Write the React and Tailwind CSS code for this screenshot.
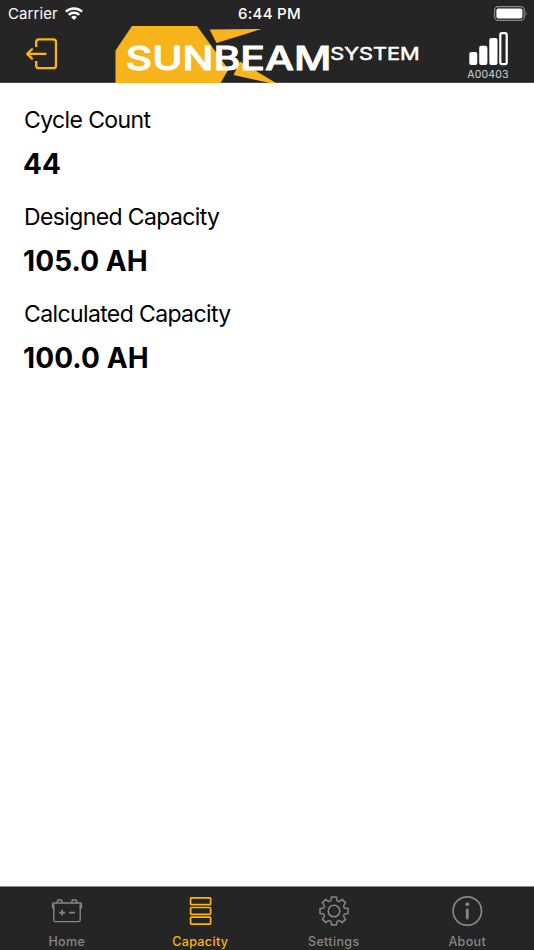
import React, { useState } from "react";

const readings = [
  { label: "Cycle Count", value: "44" },
  { label: "Designed Capacity", value: "105.0 AH" },
  { label: "Calculated Capacity", value: "100.0 AH" },
];

const WifiIcon = () => (
  <svg width="18" height="14" viewBox="0 0 18 14" fill="none" stroke="white" strokeWidth="2.5">
    <path d="M0.9 4.7 A11.6 11.6 0 0 1 17.1 4.7" />
    <path d="M3.8 7.8 A7.5 7.5 0 0 1 14.2 7.8" />
    <path d="M9 13.1 L6.1 10.2 A4.2 4.2 0 0 1 11.9 10.2 Z" fill="white" stroke="none" />
  </svg>
);

const BatteryIcon = () => (
  <svg width="34" height="16" viewBox="0 0 34 16" fill="none">
    <rect x="0.6" y="0.6" width="29.6" height="13.8" rx="3.6" stroke="#8a8a8a" strokeWidth="1.2" />
    <rect x="2.4" y="2.4" width="26" height="10.2" rx="2" fill="white" />
    <path d="M31.6 5.3 Q33.6 7.5 31.6 9.7 Z" fill="#8a8a8a" />
  </svg>
);

const LogoutIcon = () => (
  <svg
    width="32"
    height="32"
    viewBox="0 0 32 32"
    fill="none"
    stroke="#fdb60d"
    strokeWidth="2.3"
    strokeLinecap="round"
    strokeLinejoin="round"
  >
    <path strokeLinecap="butt" d="M10.2 9 V4.1 Q10.2 1.3 13 1.3 H27.2 Q30 1.3 30 4.1 V27.4 Q30 30.2 27.2 30.2 H13 Q10.2 30.2 10.2 27.4 V22.9" />
    <path d="M19.5 15.9 H1.4 M6 11.2 L1.2 15.9 L6 20.6" />
  </svg>
);

const Logo = () => (
  <svg width="306" height="57" viewBox="0 0 306 57" className="block">
    <g fill="#f7b51b">
      <path d="M0.5 57 V24.5 L17 0 H82 L113.5 43.5 L105.5 57 Z" />
      <path d="M94.6 3.6 L146.5 3 L101.5 17 Z" />
      <path d="M125 35.5 L161 57 H155 L118.5 49 Z" />
    </g>
    <g fill="white" stroke="white" fontFamily="Inter, sans-serif">
      <text x="10.8" y="44.3" fontSize="32" fontWeight="500" strokeWidth="0.9" textLength="205.5" lengthAdjust="spacingAndGlyphs">
        SUNBEAM
      </text>
      <text x="215.2" y="33.6" fontSize="17.6" fontWeight="400" strokeWidth="0.5" textLength="89.5" lengthAdjust="spacingAndGlyphs">
        SYSTEM
      </text>
    </g>
  </svg>
);

const SignalIcon = () => (
  <svg width="40" height="34" viewBox="0 0 40 34" fill="white">
    <rect x="1.3" y="20" width="8" height="13" rx="2" />
    <rect x="11.2" y="13.7" width="8.2" height="19.3" rx="2" />
    <rect x="21.3" y="6" width="8.2" height="27" rx="2" />
    <rect x="32.3" y="1.1" width="6.4" height="31" rx="1.6" fill="none" stroke="white" strokeWidth="2.2" />
  </svg>
);

const HomeIcon = () => (
  <svg width="32" height="32" viewBox="0 0 32 32" fill="none" stroke="currentColor" strokeWidth="1.4" strokeLinejoin="round">
    <path d="M2.8 9.2 V25 Q2.8 26.6 4.4 26.6 H27.6 Q29.2 26.6 29.2 25 V9.2" />
    <path d="M2.8 12.8 H1.6 V9 Q1.6 8 2.6 8 H29.4 Q30.4 8 30.4 9 V12.8 H29.2" />
    <path d="M6 8 L6.8 5 H10.6 L11.4 8 M20.6 8 L21.4 5 H25.2 L26 8" />
    <path strokeWidth="1.8" d="M8.2 17.6 H14 M11.1 14.7 V20.5 M18 17.6 H24" />
  </svg>
);

const CapacityIcon = () => (
  <svg width="32" height="32" viewBox="0 0 32 32" fill="none" stroke="currentColor" strokeWidth="1.7">
    <rect x="6.6" y="2.8" width="20" height="6.9" rx="0.8" />
    <rect x="6.6" y="12.5" width="20" height="6.9" rx="0.8" />
    <rect x="6.6" y="22.2" width="20" height="6.9" rx="0.8" />
  </svg>
);

// One tooth and the valley after it, turned eight times around the centre
const point = (radius, degrees) => {
  const angle = ((degrees - 90) * Math.PI) / 180;
  return `${(16 + radius * Math.cos(angle)).toFixed(2)} ${(16 + radius * Math.sin(angle)).toFixed(2)}`;
};

const gearPath =
  [0, 45, 90, 135, 180, 225, 270, 315]
    .map(
      (a, i) =>
        `${i === 0 ? "M" : "L"}${point(14.2, a - 10)} L${point(14.2, a + 10)} L${point(12, a + 13)} Q${point(10.3, a + 16)} ${point(10.7, a + 22.5)} Q${point(10.3, a + 29)} ${point(12, a + 32)}`
    )
    .join(" ") + " Z";

const SettingsIcon = () => (
  <svg width="32" height="32" viewBox="0 0 32 32" fill="none" stroke="currentColor" strokeWidth="1.5" strokeLinejoin="round">
    <path d={gearPath} />
    <circle cx="16" cy="16" r="5.8" />
  </svg>
);

const AboutIcon = () => (
  <svg width="32" height="32" viewBox="0 0 32 32" fill="none" stroke="currentColor">
    <circle cx="16.3" cy="16" r="14.2" strokeWidth="1.7" />
    <circle cx="16.3" cy="9.2" r="1.9" fill="currentColor" stroke="none" />
    <path d="M16.3 14.8 V23" strokeWidth="2.8" strokeLinecap="round" />
  </svg>
);

const tabs = [
  { name: "Home", Icon: HomeIcon },
  { name: "Capacity", Icon: CapacityIcon },
  { name: "Settings", Icon: SettingsIcon },
  { name: "About", Icon: AboutIcon },
];

const App = () => {
  const [activeTab, setActiveTab] = useState("Capacity");

  return (
    <div className="flex h-screen w-full flex-col bg-white font-['Inter',sans-serif] text-black">
      <header className="h-[83px] shrink-0 border-b border-[#4a4a4a] bg-[#252525] text-white">
        <div className="grid h-[26px] grid-cols-3 items-center pl-2 pr-[6px] pt-[2px]">
          <div className="flex items-center gap-[7px]">
            <span className="text-[15px] leading-5 tracking-[0.1px]">Carrier</span>
            <WifiIcon />
          </div>
          <span className="pl-[3px] text-center text-[15px] font-medium leading-5 tracking-[0.3px]">6:44 PM</span>
          <div className="flex justify-end">
            <BatteryIcon />
          </div>
        </div>

        <div className="flex h-[56px] pl-[26px] pr-[24px]">
          <button className="h-8 w-8 shrink-0 pt-3">
            <LogoutIcon />
          </button>
          <div className="ml-[57px] w-[306px] shrink-0">
            <Logo />
          </div>
          <div className="ml-auto flex w-[44px] flex-col items-center pt-[6px]">
            <SignalIcon />
            <span className="mt-[3px] text-[10.5px] leading-3 tracking-[0.2px] text-[#d6d6d6]">A00403</span>
          </div>
        </div>
      </header>

      <main className="flex-1 px-6 pt-[21px]">
        {readings.map((item) => (
          <div key={item.label} className="h-[97px]">
            <p className="text-[23px] leading-8 tracking-[-0.62px]">{item.label}</p>
            <p className="-ml-px mt-3 text-[28px] font-bold leading-8 tracking-[0.1px]">{item.value}</p>
          </div>
        ))}
      </main>

      <nav className="grid h-[64px] shrink-0 grid-cols-4 border-t border-[#8c8c8c] bg-[#252525]">
        {tabs.map(({ name, Icon }) => (
          <button
            key={name}
            onClick={() => setActiveTab(name)}
            className={`flex flex-col items-center pt-2 ${activeTab === name ? "text-[#fdb60d]" : "text-[#868686]"}`}
          >
            <Icon />
            <span className="mt-[7px] text-[12.5px] font-medium leading-4 tracking-[0.35px]">{name}</span>
          </button>
        ))}
      </nav>
    </div>
  );
};

export default App;
